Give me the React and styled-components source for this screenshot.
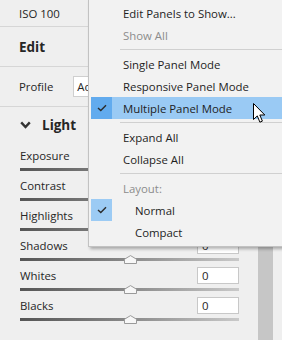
import React from 'react'
import styled, { createGlobalStyle } from 'styled-components'

const Global = createGlobalStyle`
  html, body { margin: 0; padding: 0; background: #efefef; }
  body { font-family: "Open Sans", "Noto Sans", sans-serif; }
`

const sliders = ['Exposure', 'Contrast', 'Highlights', 'Shadows', 'Whites', 'Blacks']

function Check() {
    return (
        <svg width="10" height="8" viewBox="0 0 10 8">
            <path d="M1 4 L3.8 6.6 L9 1.2" fill="none" stroke="#2b2b2b" strokeWidth="1.4" />
        </svg>
    )
}

function Thumb() {
    return (
        <svg width="13" height="9" viewBox="0 0 13 9">
            <path d="M0.5 8.5 V4.2 L6.5 0.6 L12.5 4.2 V8.5 Z" fill="#f7f7f7" stroke="#9a9a9a" />
        </svg>
    )
}

function Pointer() {
    return (
        <svg width="13" height="21" viewBox="0 0 13 21">
            <path d="M0.5 0.5 V16.5 L4.3 12.9 L6.9 19.2 L9.4 18.1 L6.8 12 H11.8 Z" fill="#fff" stroke="#000" strokeWidth="1" strokeLinejoin="round" />
        </svg>
    )
}

function MenuItem({ label, checked, active, disabled, indent }) {
    return (
        <Item $active={active}>
            <CheckCell $checked={checked} $active={active}>{checked && <Check />}</CheckCell>
            <ItemLabel $disabled={disabled} $indent={indent}>{label}</ItemLabel>
        </Item>
    )
}

export default function App() {
    return (
        <Screen>
            <Global />
            <Panel>
                <Content>
                    <TopRow>ISO 100</TopRow>
                    <HeadRow>Edit</HeadRow>
                    <ProfileRow>
                        Profile
                        <ProfileBox>Adobe Color</ProfileBox>
                    </ProfileRow>
                    <SectionHead>
                        <svg width="11" height="8" viewBox="0 0 11 8">
                            <path d="M1.2 1.4 L5.5 6 L9.8 1.4" fill="none" stroke="#333" strokeWidth="2.4" />
                        </svg>
                        Light
                    </SectionHead>
                    {sliders.map(name => (
                        <SliderRow key={name}>
                            <SliderTop>
                                {name}
                                <ValueBox>0</ValueBox>
                            </SliderTop>
                            <Track>
                                <ThumbWrap><Thumb /></ThumbWrap>
                            </Track>
                        </SliderRow>
                    ))}
                </Content>
                <ScrollTrack />
            </Panel>

            <Menu>
                <MenuItem label="Edit Panels to Show..." />
                <MenuItem label="Show All" disabled />
                <Separator />
                <MenuItem label="Single Panel Mode" />
                <MenuItem label="Responsive Panel Mode" />
                <MenuItem label="Multiple Panel Mode" checked active />
                <Separator />
                <MenuItem label="Expand All" />
                <MenuItem label="Collapse All" />
                <Separator />
                <MenuItem label="Layout:" disabled />
                <MenuItem label="Normal" checked indent />
                <MenuItem label="Compact" indent />
            </Menu>

            <Cursor><Pointer /></Cursor>
        </Screen>
    )
}

const Screen = styled.div`
    position: relative;
    width: 282px;
    height: 340px;
    overflow: hidden;
    background: #efefef;
    color: #262626;
    font-size: 11.4px;
`

const Panel = styled.div`
    display: flex;
    height: 100%;
`

const Content = styled.div`
    width: 258px;
    display: flex;
    flex-direction: column;
`

const TopRow = styled.div`
    height: 26px;
    display: flex;
    align-items: center;
    padding-left: 19px;
    border-bottom: 1px solid #d6d6d6;
`

const HeadRow = styled(TopRow)`
    height: 39px;
    font-size: 13.5px;
    font-weight: bold;
`

const ProfileRow = styled(TopRow)`
    height: 39px;
`

const ProfileBox = styled.div`
    margin-left: 20px;
    height: 19px;
    width: 160px;
    background: #fff;
    border: 1px solid #cfcfcf;
    padding-left: 3px;
    display: flex;
    align-items: center;
    white-space: nowrap;
`

const SectionHead = styled.div`
    height: 36px;
    margin-bottom: 4px;
    display: flex;
    align-items: center;
    gap: 11px;
    padding-left: 20px;
    font-size: 13.5px;
    font-weight: bold;
`

const SliderRow = styled.div`
    height: 30px;
    padding: 0 19px 0 20px;
`

const SliderTop = styled.div`
    height: 17px;
    display: flex;
    align-items: center;
    justify-content: space-between;
`

const ValueBox = styled.div`
    width: 36px;
    height: 15px;
    background: #fff;
    border: 1px solid #c8c8c8;
    padding-left: 4px;
    display: flex;
    align-items: center;
`

const Track = styled.div`
    position: relative;
    margin-top: 4px;
    height: 3px;
    background: linear-gradient(to right, #555 0%, #8a8a8a 50%, #c9c9c9 100%);
`

const ThumbWrap = styled.div`
    position: absolute;
    left: 104px;
    top: -3px;
    line-height: 0;
`

const ScrollTrack = styled.div`
    width: 15px;
    background: #c6c6c6;
`

const Menu = styled.div`
    position: absolute;
    left: 88px;
    top: -1px;
    width: 210px;
    padding-top: 2px;
    padding-bottom: 3px;
    background: #f2f2f2;
    border: 1px solid #c2c2c2;
    box-shadow: 2px 2px 3px rgba(0, 0, 0, 0.3);
`

const Item = styled.div`
    height: 22px;
    margin-left: 2px;
    display: flex;
    align-items: stretch;
    background: ${p => (p.$active ? '#9acaf4' : 'transparent')};
`

const CheckCell = styled.div`
    width: 21px;
    display: flex;
    align-items: center;
    justify-content: center;
    background: ${p => (p.$checked ? (p.$active ? '#62abee' : '#9ccbf4') : 'transparent')};
`

const ItemLabel = styled.div`
    display: flex;
    align-items: center;
    padding-left: ${p => (p.$indent ? 23 : 11)}px;
    color: ${p => (p.$disabled ? '#8c8c8c' : '#1e1e1e')};
`

const Separator = styled.div`
    height: 1px;
    margin: 3px 0 3px 31px;
    background: #d0d0d0;
`

const Cursor = styled.div`
    position: absolute;
    left: 253px;
    top: 103px;
    line-height: 0;
`
